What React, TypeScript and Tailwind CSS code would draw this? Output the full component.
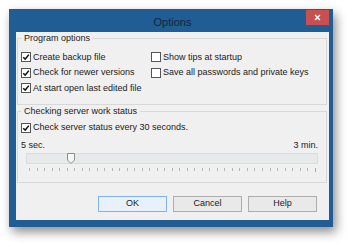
import React from 'react';

interface CheckItem {
  label: string;
  checked: boolean;
}

const leftOptions: CheckItem[] = [
  { label: 'Create backup file', checked: true },
  { label: 'Check for newer versions', checked: true },
  { label: 'At start open last edited file', checked: true },
];

const rightOptions: CheckItem[] = [
  { label: 'Show tips at startup', checked: false },
  { label: 'Save all passwords and private keys', checked: false },
];

const CheckBox: React.FC<{ checked: boolean }> = ({ checked }) => (
  <span className="flex h-[10px] w-[10px] shrink-0 items-center justify-center border border-[#555] bg-white">
    {checked && (
      <svg viewBox="0 0 10 10" className="h-[8px] w-[8px]">
        <path d="M1.5 5.2 L4 7.6 L8.6 2" fill="none" stroke="#111" strokeWidth="1.8" />
      </svg>
    )}
  </span>
);

const CheckRow: React.FC<CheckItem> = ({ label, checked }) => (
  <div className="flex h-[15.5px] items-center gap-[2px]">
    <CheckBox checked={checked} />
    <span className="whitespace-nowrap">{label}</span>
  </div>
);

const ticks = Array.from({ length: 39 }, (_, i) => i);

const App: React.FC = () => {
  return (
    <div
      className="h-[243px] w-[350px] bg-white pl-[9px] pt-[9px] text-[9px] text-[#1a1a1a]"
      style={{ fontFamily: '"Liberation Sans", Arial, sans-serif' }}
    >
      {/* Window */}
      <div className="flex h-[218px] w-[324px] flex-col bg-[#1f5d94] pb-[7px] pl-[7px] pr-[4px] shadow-[3px_5px_10px_rgba(0,0,0,0.45)]">
        {/* Title bar */}
        <div className="relative flex h-[23px] items-center justify-center">
          <span className="pt-[4px] text-[11px] text-[#15253a]">Options</span>
          <div className="absolute right-0 top-[1px] flex h-[15px] w-[23px] items-center justify-center bg-[#c75050]">
            <svg viewBox="0 0 10 10" className="h-[7px] w-[7px]">
              <path d="M1.5 1.5 L8.5 8.5 M8.5 1.5 L1.5 8.5" stroke="#fff" strokeWidth="2" />
            </svg>
          </div>
        </div>

        {/* Client area */}
        <div className="flex flex-1 flex-col bg-[#f0f0f0] pr-[2px]">
          {/* Program options */}
          <fieldset className="ml-[1px] h-[73px] border border-[#d8d8d8] pl-[3px] pt-[4.5px]">
            <legend className="px-[3px] leading-[13px]">Program options</legend>
            <div className="flex">
              <div className="w-[130px]">
                {leftOptions.map((o) => (
                  <CheckRow key={o.label} {...o} />
                ))}
              </div>
              <div>
                {rightOptions.map((o) => (
                  <CheckRow key={o.label} {...o} />
                ))}
              </div>
            </div>
          </fieldset>

          {/* Checking server work status */}
          <fieldset className="ml-[1px] h-[78px] border border-[#d8d8d8] pl-[3px] pr-[8px]">
            <legend className="px-[3px] leading-[12px]">Checking server work status</legend>
            <div className="mt-[3px]">
              <CheckRow label="Check server status every 30 seconds." checked />
            </div>
            <div className="mt-[4px] flex h-[12px] items-center justify-between">
              <span>5 sec.</span>
              <span>3 min.</span>
            </div>
            <div className="relative ml-[5px] mt-[1px] h-[11px] border border-[#dcdcdc] bg-[#e7eaea]">
              <svg viewBox="0 0 8 11" className="absolute left-[40px] top-[-1px] h-[11px] w-[8px]">
                <path d="M0.5 0.5 H7.5 V7 L4 10.5 L0.5 7 Z" fill="#f7f7f7" stroke="#8c8c8c" />
              </svg>
            </div>
            <div className="ml-[8px] mr-[2px] mt-[4px] flex items-start justify-between">
              {ticks.map((t) => (
                <span
                  key={t}
                  className={t === ticks.length - 1 ? 'h-[4px] w-[1px] bg-[#a8a8a8]' : 'h-[3px] w-[1px] bg-[#b4b4b4]'}
                />
              ))}
            </div>
          </fieldset>

          {/* Buttons */}
          <div className="mt-[13px] flex justify-end gap-[6px] pr-[10px]">
            <button className="h-[16px] w-[69px] border border-[#7eb4ea] bg-[#e8f1fb] text-[9px] text-[#1a1a1a]">
              OK
            </button>
            <button className="h-[16px] w-[69px] border border-[#adadad] bg-[#e9e9e9] text-[9px] text-[#1a1a1a]">
              Cancel
            </button>
            <button className="h-[16px] w-[69px] border border-[#adadad] bg-[#e9e9e9] text-[9px] text-[#1a1a1a]">
              Help
            </button>
          </div>
        </div>
      </div>
    </div>
  );
};

export default App;
